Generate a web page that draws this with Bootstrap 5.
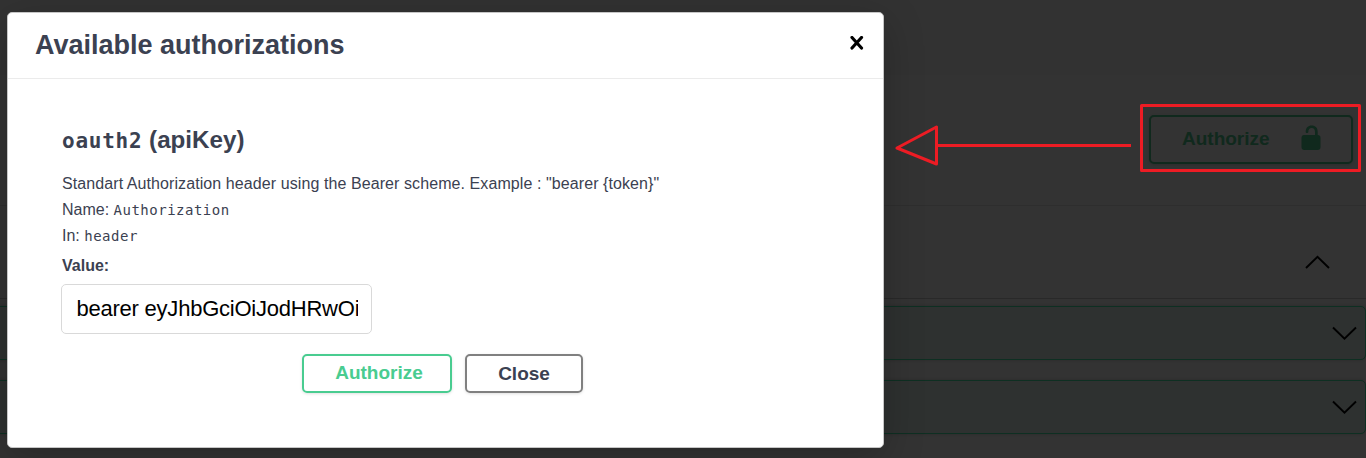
<!DOCTYPE html>
<html lang="en">
<head>
<meta charset="utf-8">
<title>Available authorizations</title>
<link href="https://cdn.jsdelivr.net/npm/bootstrap@5.3.0/dist/css/bootstrap.min.css" rel="stylesheet">
<style>
body{font-family:"Liberation Sans",Arial,sans-serif;background:#333;color:#3b4151;height:458px;overflow:hidden}
.page-top{height:75px;background:#323232}
.scheme{height:131px;padding-right:13px;padding-top:40px;border-bottom:1px solid #2e2e2e}
.btn-dim{width:204px;height:49px;border:2px solid #10291d;border-radius:5px;color:#10291d;font-size:19px;font-weight:700;padding:0 30px 1px 31px;box-shadow:0 1px 3px rgba(0,0,0,.15)}
.btn-dim svg{margin-top:-2px}
.tag-row{height:93px;padding:21px 36px 0 0;border-bottom:1px solid #292929}
.op{height:54px;border:1px solid #0e2f22;border-radius:5px;background:#2e3130;padding-right:8px;margin-left:-6px;box-shadow:0 0 3px rgba(0,0,0,.19)}
.dlg{left:7px;top:12px;width:877px;height:436px;background:#fff;border:1px solid #c6c6c6;border-radius:5px;box-shadow:0 10px 40px rgba(0,0,0,.22)}
.dlg-head{height:66px;border-bottom:1px solid #ebebeb;padding:0 19px 4px 27px}
.dlg-head h3{font-size:27px;font-weight:700;line-height:30px;padding-top:2px;margin-left:-.5px}
.dlg-body{padding:45px 54px 0}
.mono{font-family:"DejaVu Sans Mono",monospace}
h4{font-size:24.2px;font-weight:700;line-height:32px;height:47px}
h4 .mono{font-size:21px;letter-spacing:.75px}
.line{font-size:16px;line-height:26px;height:26px;white-space:nowrap}
.desc{letter-spacing:.085px}
.line .mono{font-size:14px;letter-spacing:.5px}
.form-control{width:311px;height:50px;border:1px solid #d9d9d9;border-radius:5px;font-size:22px;letter-spacing:-.23px;padding:0 13px 0 14.5px;color:#000;margin:5px 0 20px -1px}
.actions{gap:13px;padding-right:6px}
.btn-act{height:39px;border:2px solid;border-radius:5px;font-weight:700;font-size:19px;padding:0;line-height:33px;box-shadow:0 1px 3px rgba(0,0,0,.12)}
.go{width:150px;color:#49cc90;border-color:#49cc90;padding:0 0 2px 4px}
.shut{width:118px;color:#3b4151;border-color:#808080;line-height:35px}
.notes{inset:0;pointer-events:none}
</style>
</head>
<body class="position-relative">
<div class="page-top"></div>
<div class="scheme d-flex justify-content-end align-items-start">
  <button class="btn btn-dim d-flex justify-content-between align-items-center"><span>Authorize</span>
    <svg width="20" height="26" viewBox="0 0 20 26"><path fill="#10291d" d="M3 10h11V7c0-2.700-1.200-3.900-3.300-3.900S7.300 4.300 7.300 7c0 1.300-2.600 1.300-2.600 0 0-4.200 2.300-6.500 6-6.500s6 2.300 6 6.500v3c1.900 0 2.800.9 2.800 2.700V22c0 2-1 3-3 3h-13c-2 0-3-1-3-3v-9c0-2 1-3 2.500-3z"/></svg>
  </button>
</div>
<div class="tag-row d-flex justify-content-end align-items-center">
  <svg width="25" height="15" viewBox="0 0 25 15" fill="none" stroke="#000" stroke-width="1.900"><path d="M1 13 12.500 1.800 24 13"/></svg>
</div>
<div class="op d-flex justify-content-end align-items-center" style="margin-top:7px">
  <svg width="25" height="15" viewBox="0 0 25 15" fill="none" stroke="#000" stroke-width="1.900"><path d="M1 1.500 12.500 12.700 24 1.500"/></svg>
</div>
<div class="op d-flex justify-content-end align-items-center" style="margin-top:20px">
  <svg width="25" height="15" viewBox="0 0 25 15" fill="none" stroke="#000" stroke-width="1.900"><path d="M1 1.500 12.500 12.700 24 1.500"/></svg>
</div>

<div class="dlg position-absolute">
  <div class="dlg-head d-flex justify-content-between align-items-center">
    <h3 class="m-0">Available authorizations</h3>
    <svg width="14" height="16" viewBox="0 0 14 16" fill="none" stroke="#000" stroke-width="3.200" stroke-linecap="round"><path d="M2 1.500 11.500 12M11.500 1.500 2 12"/></svg>
  </div>
  <div class="dlg-body">
    <h4 class="m-0"><span class="mono">oauth2</span> (apiKey)</h4>
    <div class="line desc">Standart Authorization header using the Bearer scheme. Example : "bearer {token}"</div>
    <div class="line">Name: <span class="mono">Authorization</span></div>
    <div class="line">In: <span class="mono">header</span></div>
    <label class="line fw-bold d-block mt-1" for="token">Value:</label>
    <input id="token" class="form-control" value="bearer eyJhbGciOiJodHRwOi">
    <div class="d-flex justify-content-center actions">
      <button class="btn btn-act go">Authorize</button>
      <button class="btn btn-act shut">Close</button>
    </div>
  </div>
</div>

<svg class="notes position-absolute" width="1366" height="458" viewBox="0 0 1366 458" fill="none" stroke="#ed1c24" stroke-width="3">
  <path d="M1141.500 105.500H1359.500V170.500H1141.500zM1131 145.500H937M936.500 127V164L897 148z" stroke-linejoin="round"/>
</svg>
<script src="https://cdn.jsdelivr.net/npm/bootstrap@5.3.0/dist/js/bootstrap.bundle.min.js"></script>
</body>
</html>
